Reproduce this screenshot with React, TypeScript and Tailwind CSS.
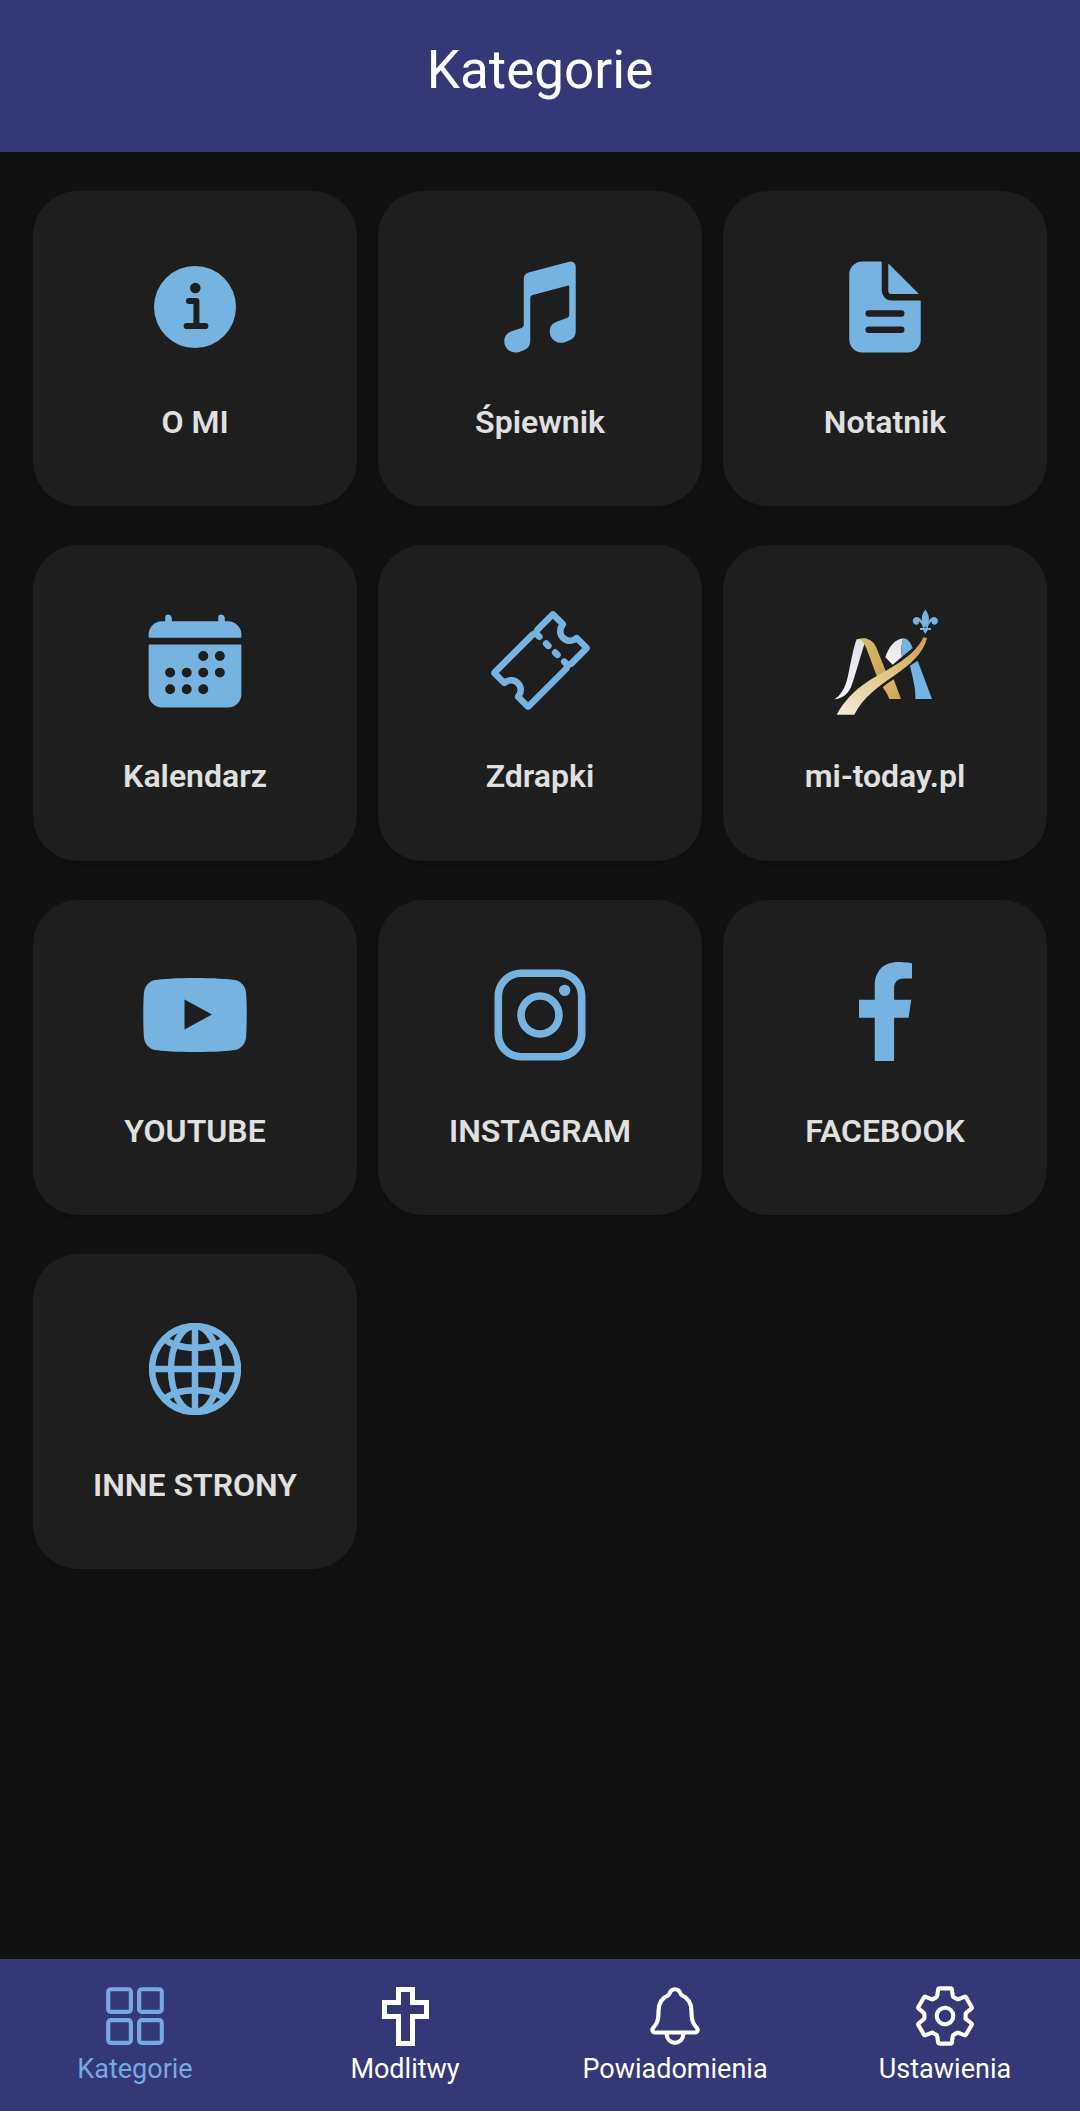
/**
 * Kategorie screen: header, 3-column tile grid, bottom tab bar.
 */

import type { ReactNode } from 'react'
import { FaFacebookF } from 'react-icons/fa'
import {
  IoCalendar,
  IoDocumentText,
  IoGridOutline,
  IoLogoInstagram,
  IoMusicalNotes,
  IoNotificationsOutline,
  IoSettingsOutline,
  IoTicketOutline,
} from 'react-icons/io5'

function InfoIcon() {
  return (
    <svg viewBox="0 0 82 82" className="h-[82px] w-[82px] text-[#76b3e0]">
      <circle cx="41" cy="41" r="41" fill="currentColor" />
      <circle cx="41.3" cy="22" r="5.3" fill="#1e1e1e" />
      <path d="M35 35H42.4V59" fill="none" stroke="#1e1e1e" strokeWidth="6" strokeLinecap="round" strokeLinejoin="round" />
      <path d="M32.7 60H51.3" fill="none" stroke="#1e1e1e" strokeWidth="6.2" strokeLinecap="round" />
    </svg>
  )
}

function YoutubeIcon() {
  return (
    <svg viewBox="0 0 104 74" className="h-[74px] w-[104px] text-[#76b3e0]">
      <path
        fill="currentColor"
        d="M52 0C70 0 86 1 92 2C98 3 102 8 103 14C104 26 104 48 103 60C102 66 98 71 92 72C86 73 70 74 52 74C34 74 18 73 12 72C6 71 2 66 1 60C0 48 0 26 1 14C2 8 6 3 12 2C18 1 34 0 52 0Z"
      />
      <path fill="#1e1e1e" d="M41.5 21.5L69 36.5L41.5 51.5Z" />
    </svg>
  )
}

function GlobeIcon() {
  return (
    <svg viewBox="0 0 92 92" className="h-[92px] w-[92px] text-[#76b3e0]" fill="none" stroke="currentColor" strokeWidth="6.5">
      <circle cx="46" cy="46" r="43" strokeWidth="6.5" />
      <ellipse cx="46" cy="46" rx="24" ry="43" />
      <path d="M46 3V89M3 46H89" />
      <path d="M15 15C27 28 65 28 77 15M15 77C27 64 65 64 77 77" />
    </svg>
  )
}

function MiTodayLogo() {
  return (
    <svg viewBox="170 61 297 297" className="h-[99px] w-[99px] overflow-visible">
      <defs>
        <linearGradient id="silver" x1="0" y1="0" x2="0" y2="1">
          <stop offset="0" stopColor="#dfe1e8" />
          <stop offset="1" stopColor="#f6f6f8" />
        </linearGradient>
        <linearGradient id="gold" x1="0" y1="0" x2="1" y2="1">
          <stop offset="0" stopColor="#dcb96e" />
          <stop offset="1" stopColor="#c9a555" />
        </linearGradient>
        <linearGradient id="swoosh" x1="0" y1="1" x2="1" y2="0">
          <stop offset="0" stopColor="#f3ecd9" />
          <stop offset="0.5" stopColor="#e3c98c" />
          <stop offset="1" stopColor="#c9a153" />
        </linearGradient>
      </defs>
      <path fill="url(#silver)" d="M232 146L262 143C250 170 230 250 215 290C205 312 185 325 165 326C185 315 198 290 205 260C215 215 222 170 232 146Z" />
      <path fill="url(#gold)" d="M240 144C268 140 285 150 295 180L320 243L293 258L262 175C255 158 248 150 240 144Z" />
      <path fill="url(#gold)" d="M322 280L343 266L365 325L330 325C325 310 317 300 310 290Z" />
      <path fill="url(#silver)" d="M318 200C328 170 345 146 372 143C366 160 364 180 368 198L340 222Z" />
      <path fill="#74b3e4" d="M372 143C385 143 393 155 400 172L368 198C364 180 366 160 372 143Z" />
      <path fill="#74b3e4" d="M392 225L415 210L458 325L408 325C410 295 400 260 392 225Z" />
      <path fill="url(#swoosh)" d="M432 140L443 142C432 190 392 222 340 258C300 285 250 320 225 372L172 372C195 330 225 300 262 275C330 232 405 200 432 140Z" />
      <g fill="#74b3e4">
        <path d="M438 57C450 72 452 85 444 108L432 108C424 85 426 72 438 57Z" />
        <path d="M431 112C428 100 424 95 418 92C420 98 418 102 412 102C405 102 400 96 400 90C402 80 412 76 420 82C428 88 432 100 436 112Z" />
        <path d="M445 112C448 100 452 95 458 92C456 98 458 102 464 102C471 102 476 96 476 90C474 80 464 76 456 82C448 88 444 100 440 112Z" />
        <path d="M422 112H455V118H445L438 130L431 118H422Z" />
      </g>
    </svg>
  )
}

function CrossOutline() {
  return (
    <svg viewBox="0 0 47 59" className="h-[59px] w-[47px]" fill="none" stroke="currentColor" strokeWidth="5">
      <path d="M16.5 2.5H30.5V15.5H44.5V29.5H30.5V56.5H16.5V29.5H2.5V15.5H16.5Z" />
    </svg>
  )
}

const TILES: { label: string; icon: ReactNode }[] = [
  { label: 'O MI', icon: <InfoIcon /> },
  { label: 'Śpiewnik', icon: <IoMusicalNotes className="h-[104px] w-[104px] text-[#76b3e0]" /> },
  { label: 'Notatnik', icon: <IoDocumentText className="h-[104px] w-[104px] text-[#76b3e0]" /> },
  { label: 'Kalendarz', icon: <IoCalendar className="h-[106px] w-[106px] text-[#76b3e0]" /> },
  { label: 'Zdrapki', icon: <IoTicketOutline className="h-[105px] w-[105px] text-[#76b3e0]" /> },
  { label: 'mi-today.pl', icon: <MiTodayLogo /> },
  { label: 'YOUTUBE', icon: <YoutubeIcon /> },
  { label: 'INSTAGRAM', icon: <IoLogoInstagram className="h-[104px] w-[104px] text-[#76b3e0]" /> },
  { label: 'FACEBOOK', icon: <FaFacebookF className="mb-[8px] h-[99px] w-[99px] text-[#76b3e0]" /> },
  { label: 'INNE STRONY', icon: <GlobeIcon /> },
]

const TABS: { label: string; icon: ReactNode; active?: boolean }[] = [
  { label: 'Kategorie', icon: <IoGridOutline className="h-[66px] w-[66px]" />, active: true },
  { label: 'Modlitwy', icon: <CrossOutline /> },
  { label: 'Powiadomienia', icon: <IoNotificationsOutline className="h-[66px] w-[66px]" /> },
  { label: 'Ustawienia', icon: <IoSettingsOutline className="h-[66px] w-[66px]" /> },
]

function Tile({ label, icon }: { label: string; icon: ReactNode }) {
  return (
    <div className="flex h-[315.33px] flex-col items-center rounded-[45px] bg-[#1e1e1e] pt-[66px] shadow-[0_4px_12px_rgba(0,0,0,0.25)]">
      <div className="flex h-[99px] items-center justify-center">{icon}</div>
      <div className="mt-[46px] text-[32px] leading-[40px] font-semibold text-[#e0e0e0]">{label}</div>
    </div>
  )
}

export default function App() {
  return (
    <div className="flex h-[2111px] w-[1080px] flex-col bg-[#121212] font-['Roboto',sans-serif]">
      <header className="flex h-[152px] items-center justify-center bg-[#343876] pb-[12px]">
        <h1 className="text-[53px] leading-[60px] font-normal text-white">Kategorie</h1>
      </header>

      <main className="grid flex-1 grid-cols-3 content-start gap-x-[21px] gap-y-[39px] px-[33px] pt-[39px]">
        {TILES.map((tile) => (
          <Tile key={tile.label} label={tile.label} icon={tile.icon} />
        ))}
      </main>

      <nav className="grid h-[152px] grid-cols-4 bg-[#343876]">
        {TABS.map((tab) => (
          <div
            key={tab.label}
            className={`flex flex-col items-center pt-[24px] ${tab.active ? 'text-[#76a8e4]' : 'text-white'}`}
          >
            <div className="flex h-[66px] items-center justify-center">{tab.icon}</div>
            <div className="mt-[2px] text-[27px] leading-[36px]">{tab.label}</div>
          </div>
        ))}
      </nav>
    </div>
  )
}
